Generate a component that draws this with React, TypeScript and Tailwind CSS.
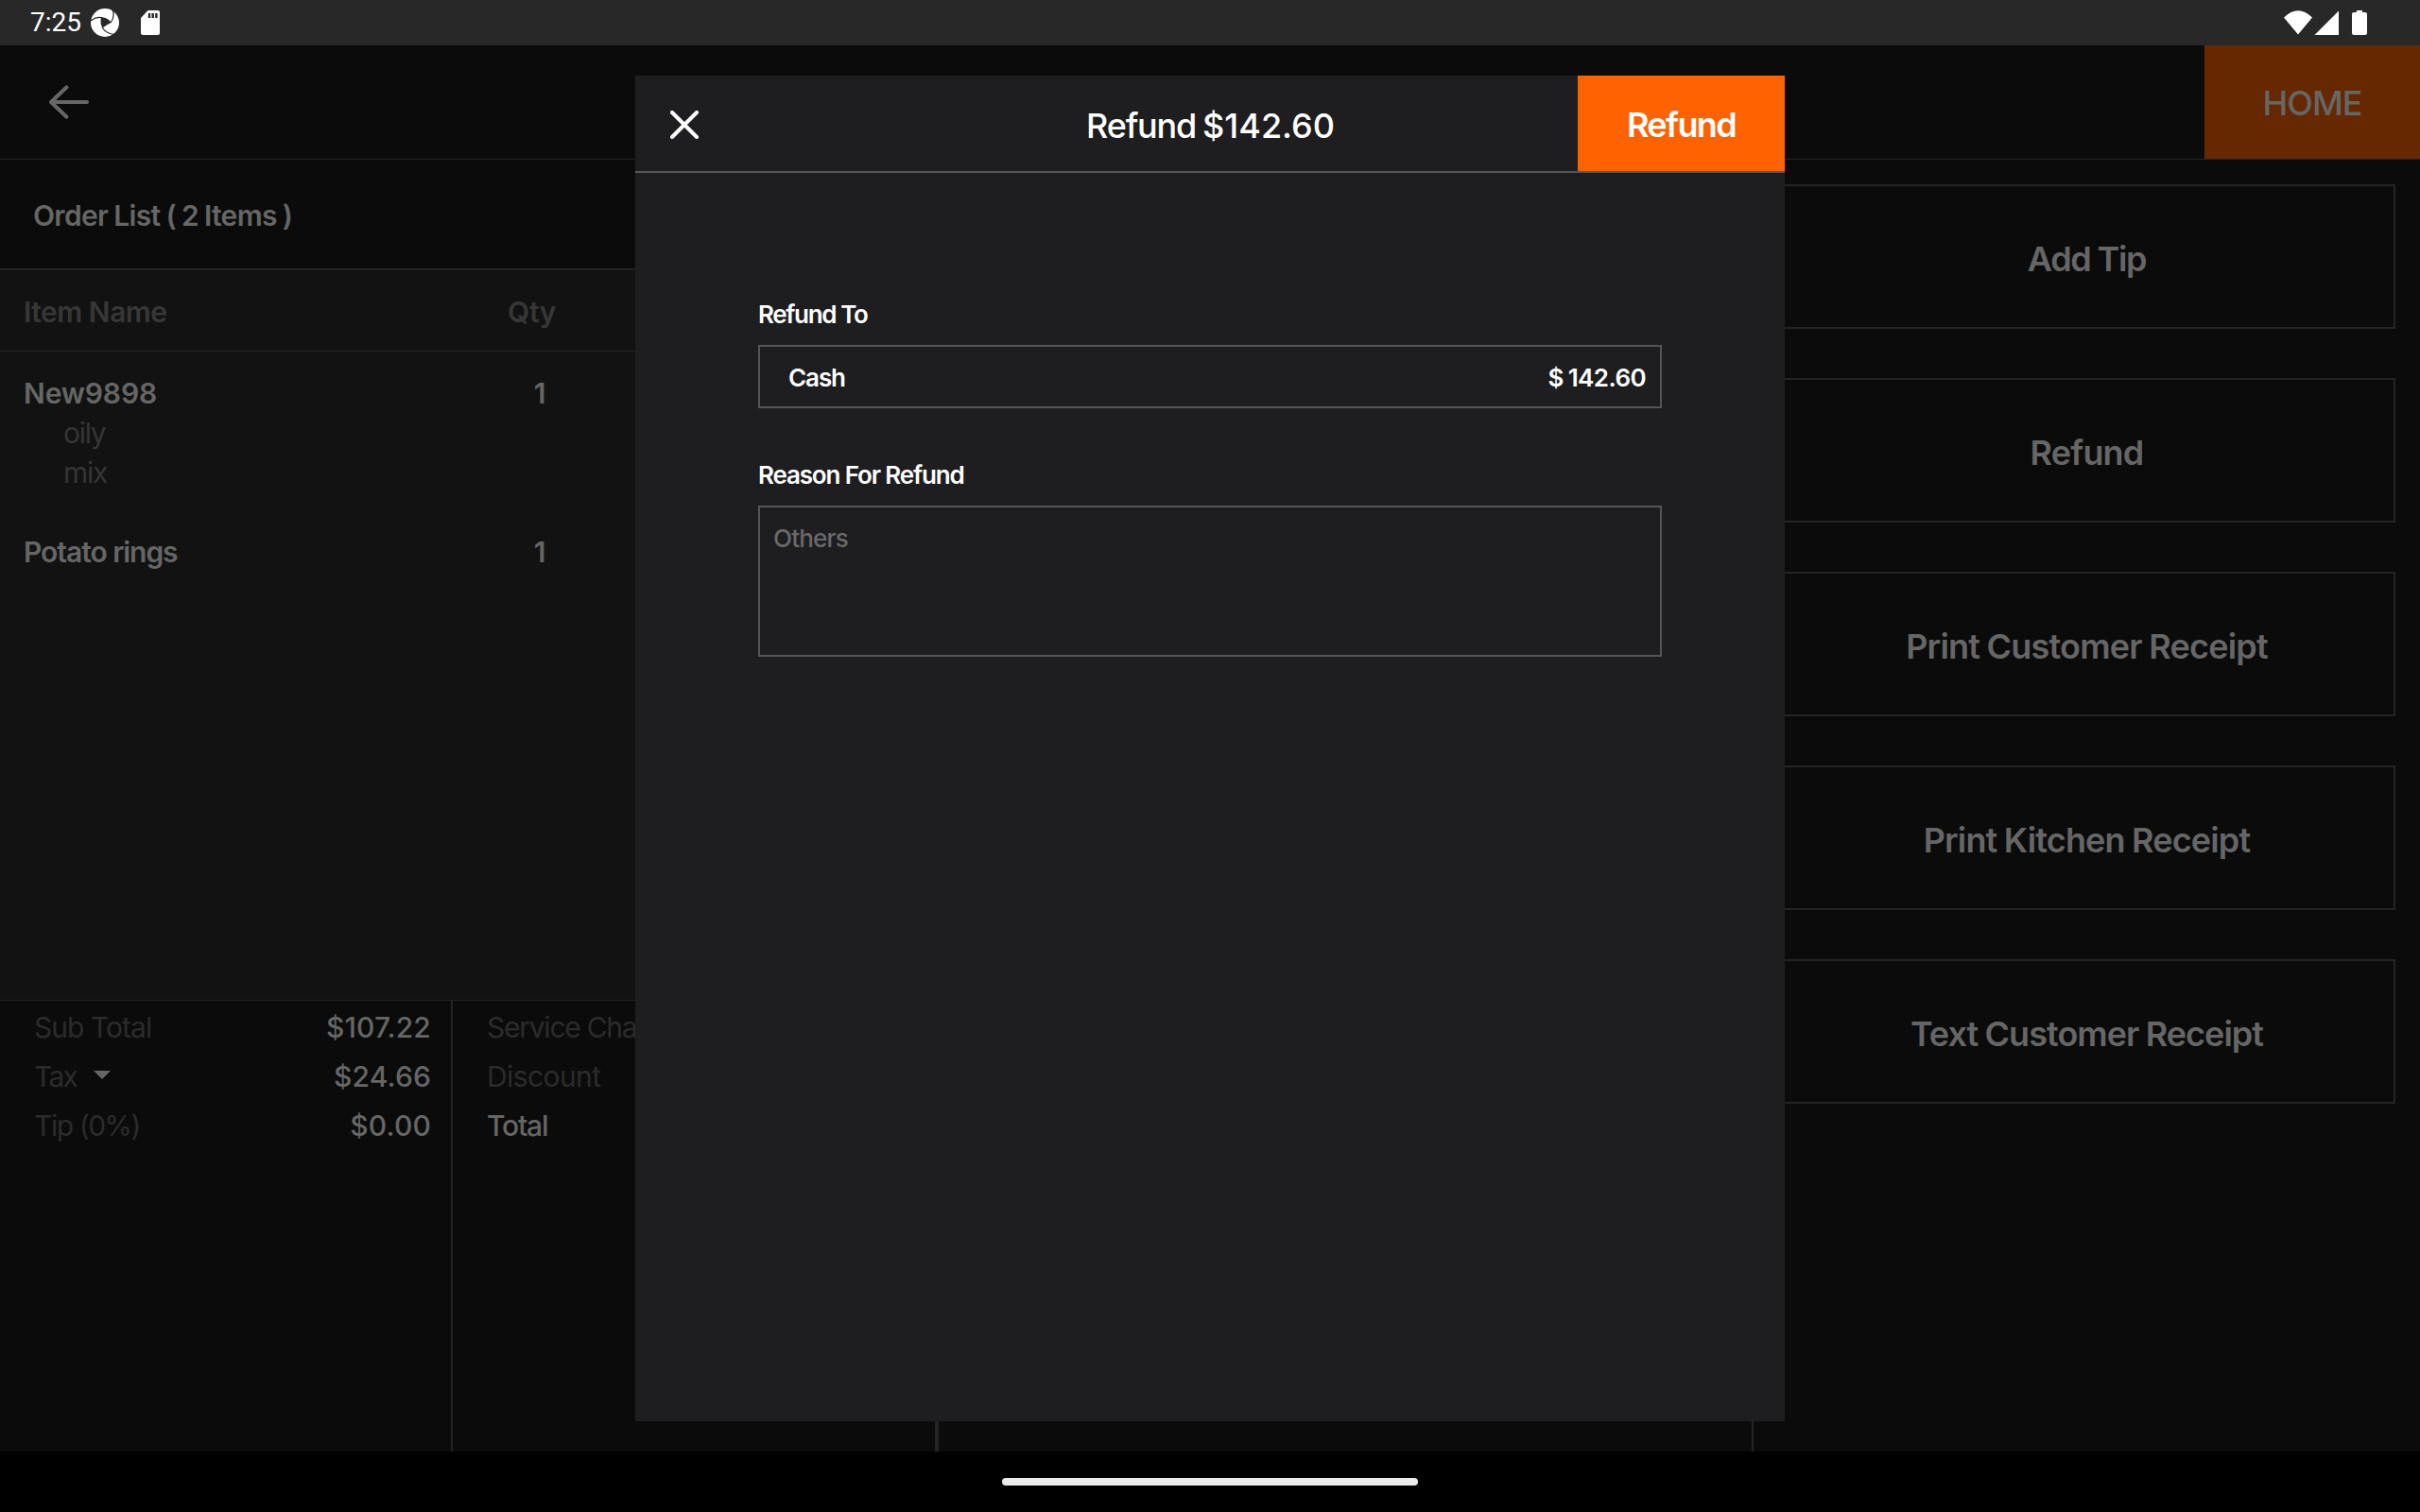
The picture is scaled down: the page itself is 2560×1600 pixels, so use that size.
import React from "react";

const actions = [
  { label: "Add Tip", spacing: "tracking-[-1.3px]" },
  { label: "Refund", spacing: "tracking-[-0.8px]" },
  { label: "Print Customer Receipt", spacing: "tracking-[-0.8px]" },
  { label: "Print Kitchen Receipt", spacing: "tracking-[-0.85px]" },
  { label: "Text Customer Receipt", spacing: "tracking-[-0.97px]" },
];

function StatusBar() {
  return (
    <div className="flex h-12 shrink-0 items-center justify-between bg-[#282828] pl-8 pr-14 text-white">
      <div className="flex items-center">
        <span className="w-[63px] font-[Roboto] text-[28px] leading-none">7:25</span>
        <svg className="ml-px" width="30" height="30" viewBox="0 0 30 30">
          <circle cx="15" cy="15" r="15" fill="#fff" />
          <path d="M11 9.500Q18 9 21.500 15Q17 17 12.500 20.500Q9.500 16 11 9.500Z" fill="#282828" />
          <path d="M0 13Q6 8 13 10M23 1.500Q26 8 21 15M26.500 27.500Q17 27.500 12 20" fill="none" stroke="#282828" strokeWidth="1.200" />
        </svg>
        <svg className="ml-[23px]" width="20" height="26" viewBox="0 0 20 26">
          <path d="M7.500 0H18A2 2 0 0 1 20 2V24A2 2 0 0 1 18 26H2A2 2 0 0 1 0 24V8Z" fill="#fff" />
          <path d="M9 3v5M12.700 3v5M16.400 3v5" stroke="#282828" strokeWidth="2.400" />
        </svg>
      </div>
      <div className="flex items-center">
        <svg width="30" height="26" viewBox="0 0 30 26">
          <path d="M0 7.500Q15-7 30 7.500L15 25.500Z" fill="#fff" />
        </svg>
        <svg className="ml-[2px]" width="26" height="26" viewBox="0 0 26 26">
          <path d="M26 0.500V26H0.500Z" fill="#fff" />
        </svg>
        <svg className="ml-[14px]" width="16" height="26" viewBox="0 0 16 26">
          <path d="M5 0h6v2h3a2 2 0 0 1 2 2v20a2 2 0 0 1-2 2H2a2 2 0 0 1-2-2V4a2 2 0 0 1 2-2h3Z" fill="#fff" />
        </svg>
      </div>
    </div>
  );
}

function Item({ name, qty, mods = [], spacing }: { name: string; qty: number; mods?: string[]; spacing: string }) {
  return (
    <div className="mb-[42px] flex pl-[25px]">
      <div className="w-[512px]">
        <div className={`text-[30px] font-semibold leading-[42px] text-[#666] ${spacing}`}>{name}</div>
        {mods.map((m) => (
          <div key={m} className="pl-[42px] text-[30px] leading-[42px] tracking-[-1.3px] text-[#353535]">{m}</div>
        ))}
      </div>
      <div className="w-[68px] text-center text-[30px] font-semibold leading-[42px] text-[#666]">{qty}</div>
    </div>
  );
}

function Row({ label, value, caret, bright, spacing }: { label: string; value?: string; caret?: boolean; bright?: boolean; spacing: string }) {
  return (
    <div className="flex h-[52px] items-center justify-between whitespace-nowrap text-[30px]">
      <span className={bright ? "font-medium text-[#666]" : "text-[#2b2b2b]"}>
        <span className={spacing}>{label}</span>
        {caret && (
          <svg className="ml-[18px] inline-block align-[8px]" width="18" height="9" viewBox="0 0 18 9">
            <path d="M0 0H18L9 9Z" fill="#666" />
          </svg>
        )}
      </span>
      {value && <span className="font-medium tracking-[0.15px] text-[#666]">{value}</span>}
    </div>
  );
}

function RefundDialog() {
  return (
    <div className="absolute left-[672px] top-20 flex h-[1424px] w-[1216px] flex-col bg-[#1e1e20] text-white">
      <div className="flex h-[103px] shrink-0 items-stretch border-b-2 border-[#565758]">
        <div className="flex w-[219px] items-center pl-[37px] pt-[3px]">
          <svg width="30" height="30" viewBox="0 0 30 30">
            <path d="M2 2 28 28M28 2 2 28" stroke="#fff" strokeWidth="4" strokeLinecap="round" />
          </svg>
        </div>
        <div className="flex flex-1 items-center justify-center gap-[7px] pl-px pt-[5px] text-[36px] font-medium">
          <span className="tracking-[-1.2px]">Refund</span>
          <span>$142.60</span>
        </div>
        <div className="flex w-[219px] items-center justify-center bg-[#ff6200] pt-[3px] text-[36px] font-semibold tracking-[-1.6px]">Refund</div>
      </div>
      <div className="flex flex-col px-[130px] pt-[132px] text-[26px] font-medium">
        <div className="font-semibold leading-9 tracking-[-1.35px]">Refund To</div>
        <div className="mt-[14px] flex h-[67px] items-center justify-between border-2 border-[#555] pl-[30px] pr-[15px] pt-px">
          <span className="font-semibold tracking-[-1.1px]">Cash</span>
          <span className="font-semibold tracking-[-0.6px] [word-spacing:-1px]">$ 142.60</span>
        </div>
        <div className="mt-[53px] font-semibold leading-9 tracking-[-1.15px]">Reason For Refund</div>
        <div className="mt-[14px] h-[160px] border-2 border-[#555] px-[14px] pt-[15px] leading-9 tracking-[-0.8px] text-[#696969]">Others</div>
      </div>
    </div>
  );
}

export default function App() {
  return (
    <div className="relative flex h-[1600px] w-[2560px] flex-col overflow-hidden bg-black font-[Inter,sans-serif]">
      <StatusBar />
      <div className="flex h-[121px] shrink-0 justify-between border-b border-[#242424] bg-[#0b0b0b]">
        <svg className="ml-[50px] mt-[41px]" width="46" height="38" viewBox="0 0 46 38">
          <path d="M20.500 3.300 4 19 20.500 34.700M4 19H42" fill="none" stroke="#666" strokeWidth="4" strokeLinecap="round" strokeLinejoin="round" />
        </svg>
        <div className="flex w-[228px] items-center justify-center bg-[#662800] pt-px text-[36px] font-medium tracking-[-1px] text-[#666]">HOME</div>
      </div>
      <div className="flex h-[1367px] shrink-0 bg-[#0b0b0b]">
        <div className="flex w-[1855px] flex-col border-r-2 border-[#242424]">
          <div className="flex h-[117px] shrink-0 items-center border-b-2 border-[#242424] pl-[35px] pt-[3px] text-[30px] font-semibold tracking-[-0.7px] text-[#666] [word-spacing:-0.8px]">
            Order List ( 2 Items )
          </div>
          <div className="mt-px flex h-[772px] shrink-0 flex-col border-b border-[#242424] bg-[#121212]">
            <div className="mb-[23px] flex h-[85px] shrink-0 items-center border-b border-[#242424] pl-[25px] pt-[2px] text-[30px] font-semibold text-[#373737]">
              <span className="w-[512px] tracking-[-0.5px]">Item Name</span>
              <span className="tracking-[-0.3px]">Qty</span>
            </div>
            <Item name="New9898" qty={1} mods={["oily", "mix"]} spacing="tracking-[-0.15px]" />
            <Item name="Potato rings" qty={1} spacing="tracking-[-1.05px]" />
          </div>
          <div className="flex flex-1">
            <div className="w-[479px] border-r-2 border-[#242424] pl-[36px] pr-[21px] pt-[2px]">
              <Row label="Sub Total" value="$107.22" spacing="tracking-[-0.95px]" />
              <Row label="Tax" value="$24.66" caret spacing="tracking-[-1.7px]" />
              <Row label="Tip (0%)" value="$0.00" spacing="tracking-[-1.45px]" />
            </div>
            <div className="w-[514px] border-r-4 border-[#242424] pl-[36px] pr-[22px] pt-[2px]">
              <Row label="Service Charge" spacing="tracking-[-1.25px]" />
              <Row label="Discount" spacing="tracking-[-0.6px]" />
              <Row label="Total" bright spacing="tracking-[-1.2px]" />
            </div>
          </div>
        </div>
        <div className="flex flex-1 flex-col gap-[52px] px-[26px] pt-[26px]">
          {actions.map((a) => (
            <div
              key={a.label}
              className={`flex h-[153px] items-center justify-center border-2 border-[#242424] pt-[4px] text-[36px] font-semibold text-[#666] [word-spacing:-0.8px] ${a.spacing}`}
            >
              {a.label}
            </div>
          ))}
        </div>
      </div>
      <div className="flex h-16 shrink-0 items-center justify-center bg-black">
        <div className="h-2 w-[440px] rounded-full bg-[#ebebeb]" />
      </div>
      <RefundDialog />
    </div>
  );
}
